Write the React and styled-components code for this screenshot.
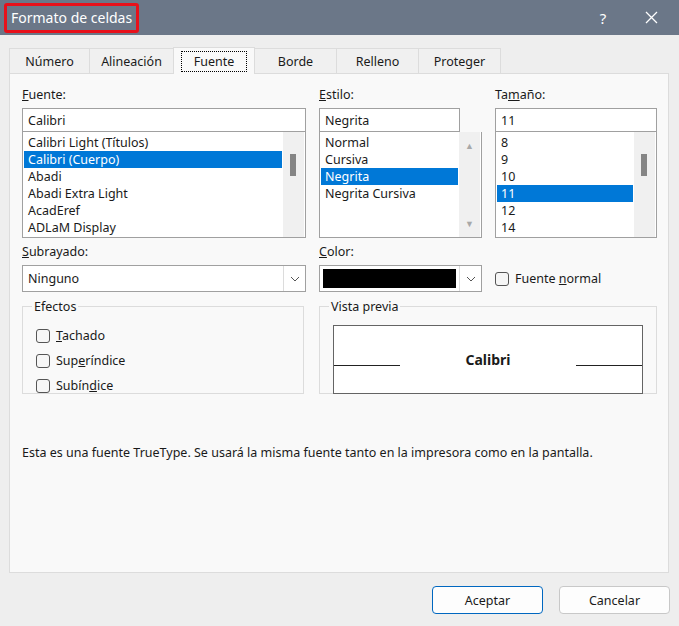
import React from 'react'
import styled, { createGlobalStyle } from 'styled-components'

const Global = createGlobalStyle`
  body { margin: 0; background: #eeeeee; font-family: "Noto Sans", "Open Sans", sans-serif; font-size: 12px; color: #1a1a1a; }
`

const Window = styled.div`
  width: 679px;
  height: 626px;
  display: flex;
  flex-direction: column;
  background: #eeeeee;
`

const TitleBar = styled.div`
  height: 35px;
  background: #6b7788;
  display: flex;
  align-items: center;
  color: #fff;
  padding-left: 4px;
`

const Title = styled.div`
  font-size: 14px;
  padding: 2px 4px;
  border: 3px solid #e8101a;
  border-radius: 3px;
  line-height: 20px;
`

const TitleBtn = styled.div`
  width: 40px;
  text-align: center;
  font-size: 15px;
  margin-left: ${p => p.first ? 'auto' : '8px'};
  margin-right: ${p => p.last ? '8px' : '0'};
  display: flex;
  justify-content: center;
`

const Tabs = styled.div`
  display: flex;
  margin: 12px 0 0 10px;
  height: 26px;
  align-items: flex-end;
`

const Tab = styled.div`
  height: ${p => p.active ? '26px' : '24px'};
  width: ${p => p.w}px;
  justify-content: center;
  border: 1px solid #dcdcdc;
  border-bottom: none;
  margin-left: -1px;
  margin-right: ${p => p.gap ? '6px' : '0'};
  background: ${p => p.active ? '#f9f9f9' : '#f0f0f0'};
  display: flex;
  align-items: center;
  font-size: 12.5px;
  position: relative;
  z-index: ${p => p.active ? 1 : 0};
  margin-bottom: ${p => p.active ? '-1px' : '0'};
  span { outline: ${p => p.active ? '1px dotted #000' : 'none'}; padding: 1px 12px; }
`

const Panel = styled.div`
  margin: 0 10px 0 9px;
  height: 500px;
  background: #f9f9f9;
  border: 1px solid #dcdcdc;
  padding: 13px 12px 0 12px;
  box-sizing: border-box;
`

const Grid = styled.div`
  display: grid;
  grid-template-columns: 284px 163px 162px;
  column-gap: 13px;
`

const Col = styled.div`
  display: flex;
  flex-direction: column;
  margin-top: ${p => p.top || 0}px;
`

const Label = styled.div`
  font-size: 12.5px;
  height: 21px;
  line-height: 16px;
`

const Input = styled.div`
  height: 24px;
  border: 1px solid #a0a0a0;
  background: #fff;
  padding-left: 5px;
  display: flex;
  align-items: center;
  font-size: 12.5px;
  box-sizing: border-box;
  width: ${p => p.w || '100%'};
`

const List = styled.div`
  height: 106px;
  border: 1px solid #a0a0a0;
  border-top: none;
  background: #fff;
  display: flex;
  box-sizing: border-box;
  padding: 2px 1px 0 1px;
  overflow: hidden;
`

const Items = styled.div`
  flex: 1;
`

const Item = styled.div`
  height: 17px;
  line-height: 17px;
  padding-left: 4px;
  font-size: 12.5px;
  background: ${p => p.sel ? '#0078d7' : 'transparent'};
  color: ${p => p.sel ? '#fff' : '#1a1a1a'};
  white-space: nowrap;
`

const Scroll = styled.div`
  width: 21px;
  margin: -2px 0 0 1px;
  background: #f0f0f0;
  position: relative;
  display: flex;
  flex-direction: column;
  justify-content: space-between;
  align-items: center;
  padding: 7px 0;
  box-sizing: border-box;
  color: #a8a8a8;
  font-size: 9px;
`

const Thumb = styled.div`
  position: absolute;
  top: ${p => p.top}px;
  left: 7px;
  width: 6px;
  height: 22px;
  background: #858585;
`

const Select = styled.div`
  height: 27px;
  border: 1px solid #a0a0a0;
  background: #fff;
  display: flex;
  box-sizing: border-box;
  font-size: 12.5px;
`

const SelectText = styled.div`
  flex: 1;
  display: flex;
  align-items: center;
  padding-left: 5px;
`

const Swatch = styled.div`
  flex: 1;
  margin: 3px;
  background: #000;
`

const Arrow = styled.div`
  width: 21px;
  border-left: 1px solid #dcdcdc;
  display: flex;
  align-items: center;
  justify-content: center;
`

const CheckRow = styled.label`
  display: flex;
  align-items: center;
  gap: 6px;
  font-size: 12.5px;
  height: 25px;
`

const Box = styled.span`
  width: 14px;
  height: 14px;
  border: 1px solid #555;
  border-radius: 3px;
  background: #f6f6f6;
  box-sizing: border-box;
`

const Lower = styled.div`
  display: grid;
  grid-template-columns: 282px 338px;
  column-gap: 15px;
  margin-top: 6px;
`

const Fieldset = styled.fieldset`
  margin: 0;
  border: 1px solid #dcdcdc;
  padding: 8px 13px 0 13px;
  height: 96px;
  box-sizing: border-box;
  legend { padding: 0 2px; margin-left: -4px; font-size: 12.5px; }
`

const Preview = styled.div`
  height: 69px;
  border: 1px solid #646464;
  background: #fff;
  box-sizing: border-box;
  display: flex;
  align-items: center;
  justify-content: space-between;
  margin-top: 2px;
`

const PreviewLine = styled.div`
  width: 66px;
  height: 1px;
  background: #222;
  margin-top: 12px;
`

const PreviewText = styled.div`
  font-weight: bold;
  font-size: 14px;
`

const Info = styled.div`
  margin-top: 50px;
  font-size: 12.5px;
`

const Footer = styled.div`
  display: flex;
  justify-content: flex-end;
  gap: 16px;
  padding: 13px 9px 0 0;
`

const Button = styled.div`
  width: 111px;
  height: 28px;
  border: 1px solid ${p => p.primary ? '#0067c0' : '#c8c8c8'};
  border-radius: 4px;
  background: #fdfdfd;
  display: flex;
  align-items: center;
  justify-content: center;
  font-size: 12.5px;
  box-sizing: border-box;
`

const Chevron = () => (
  <svg width="10" height="6" viewBox="0 0 10 6"><path d="M1 1l4 4 4-4" fill="none" stroke="#555" strokeWidth="1" /></svg>
)

export default function App() {
  return (
    <Window>
      <Global />
      <TitleBar>
        <Title>Formato de celdas</Title>
        <TitleBtn first>?</TitleBtn>
        <TitleBtn last>
          <svg width="13" height="13" viewBox="0 0 13 13"><path d="M1 1l11 11M12 1L1 12" stroke="#fff" strokeWidth="1.3" /></svg>
        </TitleBtn>
      </TitleBar>
      <Tabs>
        <Tab w={79}><span>Número</span></Tab>
        <Tab w={83}><span>Alineación</span></Tab>
        <Tab active w={80}><span>Fuente</span></Tab>
        <Tab w={81}><span>Borde</span></Tab>
        <Tab w={81}><span>Relleno</span></Tab>
        <Tab w={81}><span>Proteger</span></Tab>
      </Tabs>
      <Panel>
        <Grid>
          <Col>
            <Label><u>F</u>uente:</Label>
            <Input>Calibri</Input>
            <List>
              <Items>
                <Item>Calibri Light (Títulos)</Item>
                <Item sel>Calibri (Cuerpo)</Item>
                <Item>Abadi</Item>
                <Item>Abadi Extra Light</Item>
                <Item>AcadEref</Item>
                <Item>ADLaM Display</Item>
              </Items>
              <Scroll><Thumb top={22} /></Scroll>
            </List>
          </Col>
          <Col>
            <Label><u>E</u>stilo:</Label>
            <Input w="141px">Negrita</Input>
            <List>
              <Items>
                <Item>Normal</Item>
                <Item>Cursiva</Item>
                <Item sel>Negrita</Item>
                <Item>Negrita Cursiva</Item>
              </Items>
              <Scroll><span>▲</span><span>▼</span></Scroll>
            </List>
          </Col>
          <Col>
            <Label>Ta<u>m</u>año:</Label>
            <Input>11</Input>
            <List>
              <Items>
                <Item>8</Item>
                <Item>9</Item>
                <Item>10</Item>
                <Item sel>11</Item>
                <Item>12</Item>
                <Item>14</Item>
              </Items>
              <Scroll><Thumb top={22} /></Scroll>
            </List>
          </Col>
          <Col top={6}>
            <Label><u>S</u>ubrayado:</Label>
            <Select>
              <SelectText>Ninguno</SelectText>
              <Arrow><Chevron /></Arrow>
            </Select>
          </Col>
          <Col top={6}>
            <Label><u>C</u>olor:</Label>
            <Select>
              <Swatch />
              <Arrow><Chevron /></Arrow>
            </Select>
          </Col>
          <Col top={28}>
            <CheckRow><Box /><span>Fuente <u>n</u>ormal</span></CheckRow>
          </Col>
        </Grid>
        <Lower>
          <Fieldset>
            <legend>Efectos</legend>
            <CheckRow><Box /><span><u>T</u>achado</span></CheckRow>
            <CheckRow><Box /><span>Sup<u>e</u>ríndice</span></CheckRow>
            <CheckRow><Box /><span>Subín<u>d</u>ice</span></CheckRow>
          </Fieldset>
          <Fieldset>
            <legend>Vista previa</legend>
            <Preview>
              <PreviewLine />
              <PreviewText>Calibri</PreviewText>
              <PreviewLine />
            </Preview>
          </Fieldset>
        </Lower>
        <Info>Esta es una fuente TrueType. Se usará la misma fuente tanto en la impresora como en la pantalla.</Info>
      </Panel>
      <Footer>
        <Button primary>Aceptar</Button>
        <Button>Cancelar</Button>
      </Footer>
    </Window>
  )
}
